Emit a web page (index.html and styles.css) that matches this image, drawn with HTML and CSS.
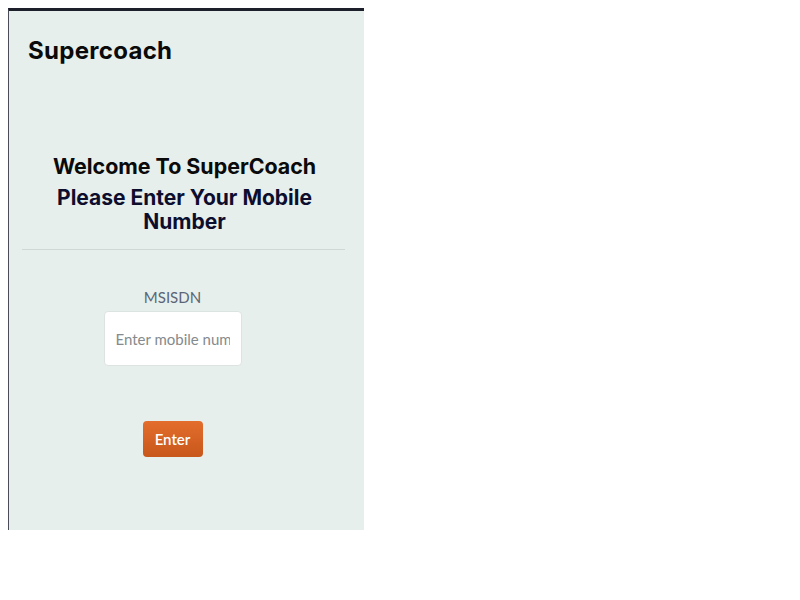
FILE: index.html
```html
<!DOCTYPE html>
<html>
<head>
<meta charset="utf-8">
<link rel="stylesheet" href="styles.css">
</head>
<body>
<div class="panel">
  <header class="brand">Supercoach</header>
  <section class="intro">
    <h1 class="welcome">Welcome To SuperCoach</h1>
    <h2 class="prompt">Please Enter Your Mobile Number</h2>
  </section>
  <hr class="divider">
  <form class="form">
    <label class="label" for="msisdn">MSISDN</label>
    <input class="input" id="msisdn" type="text" placeholder="Enter mobile number">
    <button class="btn" type="button">Enter</button>
  </form>
</div>
</body>
</html>
```
FILE: styles.css
```css
html, body {
  margin: 0;
  padding: 0;
  background: #ffffff;
}
body {
  padding: 8px;
}
.panel {
  width: 355px;
  height: 519px;
  background: #e6efeb;
  border-top: 3px solid #1d1f2b;
  border-left: 1px solid #4a4d57;
  display: flex;
  flex-direction: column;
}
.brand {
  font-family: Inter, "Liberation Sans", sans-serif;
  font-weight: 700;
  font-size: 24px;
  line-height: 28px;
  color: #0a0a0a;
  padding: 26px 0 0 19px;
  letter-spacing: 0.3px;
}
.intro {
  margin-top: 87px;
  text-align: center;
  padding-right: 4px;
}
.welcome {
  margin: 0;
  font-family: Inter, "Liberation Sans", sans-serif;
  font-weight: 700;
  font-size: 21.4px;
  line-height: 28px;
  color: #0a0a0a;
}
.prompt {
  margin: 6px 0 0;
  font-family: Inter, "Liberation Sans", sans-serif;
  font-weight: 700;
  font-size: 21px;
  line-height: 24px;
  color: #0d0d2e;
  padding: 0 36px;
}
.divider {
  margin: 15px 0 0 13px;
  width: 323px;
  border: 0;
  height: 1px;
  background: #cfd8d4;
}
.form {
  display: flex;
  flex-direction: column;
  align-items: center;
  padding-right: 28px;
  margin-top: 38px;
}
.label {
  font-family: Lato, "Liberation Sans", sans-serif;
  font-size: 15px;
  line-height: 18px;
  color: #5b6577;
}
.input {
  margin-top: 5px;
  width: 138px;
  height: 55px;
  box-sizing: border-box;
  border: 1px solid #dde3e1;
  border-radius: 4px;
  background: #ffffff;
  padding: 0 11px;
  font-family: Lato, "Liberation Sans", sans-serif;
  font-size: 15px;
  color: #333;
}
.input::placeholder {
  color: #858a8c;
}
.btn {
  margin-top: 55px;
  width: 60px;
  height: 36px;
  border: 0;
  border-radius: 4px;
  background: linear-gradient(#e36d2c, #c8571c);
  color: #ffffff;
  font-family: Lato, "Liberation Sans", sans-serif;
  font-weight: 600;
  font-size: 15px;
  padding: 0;
}
```
